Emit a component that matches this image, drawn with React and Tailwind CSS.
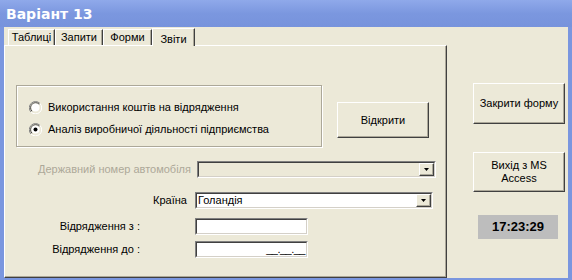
import React from 'react';

const FONT = { fontFamily: '"Liberation Sans", Arial, sans-serif' };

function Radio({ checked }) {
  return (
    <svg width="13" height="13" viewBox="0 0 13 13" className="shrink-0">
      <path d="M11 2.5 A5.5 5.5 0 0 0 2 11" fill="none" stroke="#808080" strokeWidth="1" />
      <path d="M10.2 3.3 A4.5 4.5 0 0 0 3 10.2" fill="none" stroke="#404040" strokeWidth="1" />
      <circle cx="6.5" cy="6.5" r="4" fill="#fff" />
      <path d="M2 11 A5.5 5.5 0 0 0 11 2.5" fill="none" stroke="#fff" strokeWidth="1" />
      {checked && <circle cx="6.5" cy="6.5" r="2" fill="#000" />}
    </svg>
  );
}

function Btn({ className, children }) {
  return (
    <div
      className={
        'flex items-center justify-center text-center text-[11px] leading-[13px] text-black bg-[#ece9d8] border border-t-white border-l-white border-r-[#404040] border-b-[#404040] shadow-[inset_-1px_-1px_0_#aca899] ' +
        className
      }
    >
      {children}
    </div>
  );
}

function DropBtn() {
  return (
    <div className="w-[15px] h-full flex items-center justify-center bg-[#ece9d8] border border-t-white border-l-white border-r-[#404040] border-b-[#404040] shadow-[inset_-1px_-1px_0_#aca899]">
      <svg width="5" height="3" viewBox="0 0 5 3">
        <path d="M0 0 H5 L2.5 3 Z" fill="#000" />
      </svg>
    </div>
  );
}

function Sunken({ className, children, bg = 'bg-white' }) {
  return (
    <div
      className={
        'flex items-stretch border border-t-[#808080] border-l-[#808080] border-r-white border-b-white ' +
        className
      }
    >
      <div className={'flex-1 flex items-stretch border border-t-[#404040] border-l-[#404040] border-r-[#d4d0c8] border-b-[#d4d0c8] ' + bg}>
        {children}
      </div>
    </div>
  );
}

const tabs = ['Таблиці', 'Запити', 'Форми'];

export default function App() {
  return (
    <div className="w-[572px] h-[280px] flex flex-col bg-[#7a96df] overflow-hidden" style={FONT}>
      <div className="h-[27px] shrink-0 flex items-center pl-[6px] bg-gradient-to-b from-[#8fa9ea] via-[#7b97df] to-[#7793dc]">
        <span
          className="text-white font-bold text-[14px] leading-none"
          style={{ fontFamily: '"DejaVu Sans", sans-serif' }}
        >
          Варіант 13
        </span>
      </div>

      <div className="flex-1 flex ml-[4px] mr-[4px] mb-[2px] bg-[#ece9d8]">
        {/* left: tab control */}
        <div className="w-[443px] flex flex-col">
          <div className="h-[18px] flex items-end pl-[4px] text-[11px] text-black">
            {tabs.map(t => (
              <div
                key={t}
                className="h-[16px] px-[4px] flex items-center justify-center border-t border-l border-t-white border-l-white border-r border-r-[#404040] shadow-[inset_-1px_0_0_#aca899]"
                style={{ width: t === 'Таблиці' ? 47 : t === 'Запити' ? 48 : 49 }}
              >
                {t}
              </div>
            ))}
            <div className="w-[43px] h-[18px] flex items-start justify-center pt-[2px] bg-[#ece9d8] border-t border-l border-t-white border-l-white border-r border-r-[#404040] shadow-[inset_-1px_0_0_#aca899] -mb-px relative z-10">
              Звіти
            </div>
          </div>

          <div className="flex-1 flex flex-col border border-t-white border-l-white border-r-[#404040] border-b-[#404040] shadow-[inset_-1px_-1px_0_#aca899] text-[11px] text-black">
            <div className="flex items-start mt-[39px] ml-[11px]">
              <div className="w-[306px] h-[62px] border border-[#aca899] shadow-[inset_1px_1px_0_#fff,1px_1px_0_#fff] flex flex-col pt-[15px] pl-[12px] gap-[9px]">
                <div className="flex items-center gap-[6px] h-[13px]">
                  <Radio />
                  <span>Використання коштів на відрядження</span>
                </div>
                <div className="flex items-center gap-[6px] h-[13px]">
                  <Radio checked />
                  <span>Аналіз виробничої діяльності підприємства</span>
                </div>
              </div>
              <Btn className="w-[92px] h-[36px] ml-[15px] mt-[17px]">Відкрити</Btn>
            </div>

            <div className="flex items-center mt-[14px] h-[17px]">
              <span className="w-[187px] text-right text-[#aca899] pr-[1px]">Державний номер автомобіля</span>
              <Sunken className="w-[239px] h-[17px] ml-[5px]" bg="bg-[#ece9d8]">
                <div className="flex-1" />
                <DropBtn />
              </Sunken>
            </div>

            <div className="flex items-center mt-[14px] h-[16px]">
              <span className="w-[182px] text-right">Країна</span>
              <Sunken className="w-[238px] h-[17px] ml-[8px]">
                <div className="flex-1 flex items-center pl-[1px] text-[11px]">Голандія</div>
                <DropBtn />
              </Sunken>
            </div>

            <div className="flex items-center mt-[10px] h-[17px]">
              <span className="w-[135px] text-right">Відрядження з :</span>
              <Sunken className="w-[113px] h-[17px] ml-[55px]" />
            </div>

            <div className="flex items-center mt-[6px] h-[16px]">
              <span className="w-[135px] text-right">Відрядження до :</span>
              <Sunken className="w-[113px] h-[17px] ml-[55px]">
                <div className="flex-1 flex items-end justify-end pr-[1px] text-[11px] leading-[13px] tracking-[-0.5px]">
                  __.__.__
                </div>
              </Sunken>
            </div>
          </div>
        </div>

        {/* right column */}
        <div className="flex-1 flex flex-col">
          <Btn className="w-[92px] h-[41px] ml-[26px] mt-[56px]">Закрити форму</Btn>
          <Btn className="w-[92px] h-[40px] ml-[26px] mt-[28px]">
            Вихід з MS
            <br />
            Access
          </Btn>
          <div className="w-[80px] h-[24px] ml-[31px] mt-[23px] bg-[#bdbdbd] flex items-center justify-center text-[13px] font-bold text-black">
            17:23:29
          </div>
        </div>
      </div>
    </div>
  );
}
